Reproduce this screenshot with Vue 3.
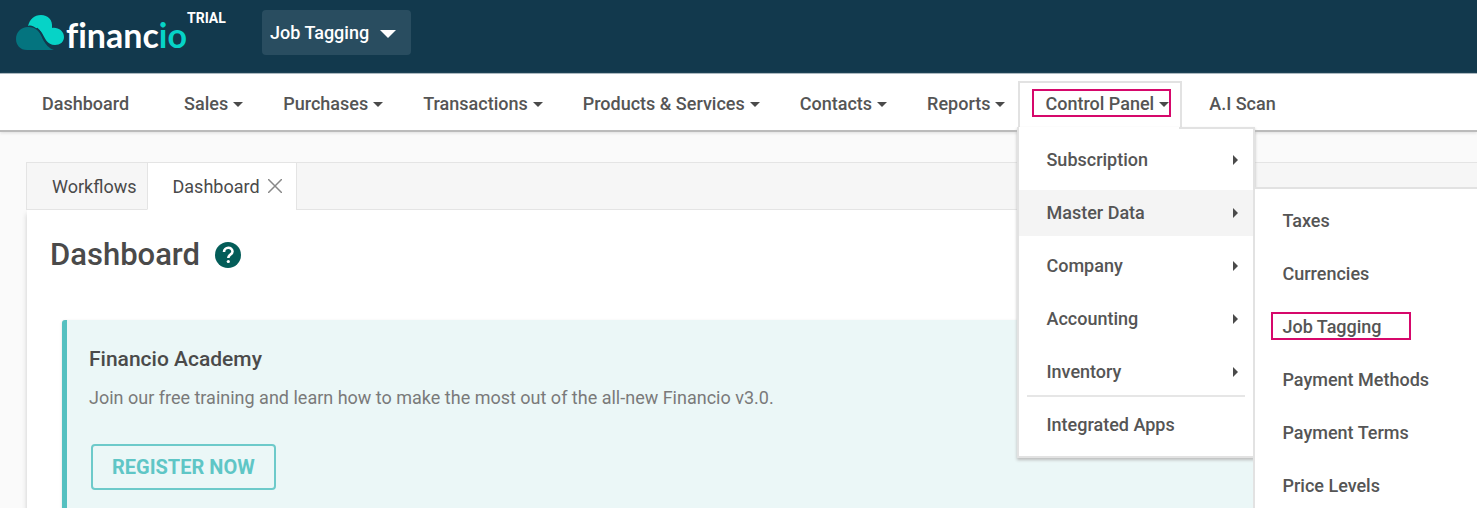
<script setup>
import { ref } from "vue";

const job = ref("Job Tagging");

const navItems = [
  { name: "Dashboard" },
  { name: "Sales", caret: true },
  { name: "Purchases", caret: true },
  { name: "Transactions", caret: true },
  { name: "Products & Services", caret: true },
  { name: "Contacts", caret: true },
  { name: "Reports", caret: true },
  { name: "Control Panel", caret: true, open: true },
  { name: "A.I Scan" },
];

const panelItems = [
  { name: "Subscription", sub: true },
  { name: "Master Data", sub: true, active: true },
  { name: "Company", sub: true },
  { name: "Accounting", sub: true },
  { name: "Inventory", sub: true },
  { name: "Integrated Apps", divided: true },
];

const masterItems = ["Taxes", "Currencies", "Job Tagging", "Payment Methods", "Payment Terms", "Price Levels"];
</script>

<template>
  <div class="page">
    <header class="topbar">
      <a href="#" class="logo">
        <svg class="cloud" width="50" height="38" viewBox="0 0 50 38">
          <path d="M12 11 C14 4 18 0 25 0 C32 0 37 5 36 13 C42 12 48 16 48 22 C48 27 44 30 39 30 C31 30 29 23 26 18 C24 15 22 13 20 13 C17 11 15 10 12 11 Z" fill="#06d3c7" />
          <path d="M11 35 C4 35 0 30 0 24 C0 17 5 12 12 12 C16 12 19 13 21 15 C27 20 27 31 38 35 Z" fill="#04747f" />
          <path d="M21 13 C26 16 26 25 32 30" fill="none" stroke="#12394d" stroke-width="1" />
        </svg>
        <span class="brand">financ<span class="teal">io</span></span>
        <span class="trial">TRIAL</span>
      </a>
      <div class="picker">
        <select v-model="job" aria-label="Job">
          <option>Job Tagging</option>
        </select>
        <svg class="picker-arrow" width="16" height="8" viewBox="0 0 16 8">
          <path d="M0 0H16L8 8Z" fill="#fff" />
        </svg>
      </div>
    </header>

    <nav class="navbar">
      <div v-for="item in navItems" :key="item.name" class="nav-item" :class="{ open: item.open }">
        <a href="#" :class="{ marked: item.open }">
          {{ item.name }}
          <span class="caret" :class="{ hidden: !item.caret }"></span>
        </a>
        <div v-if="item.open" class="menu">
          <div v-for="p in panelItems" :key="p.name" class="menu-item" :class="{ active: p.active, divided: p.divided }">
            <a href="#">{{ p.name }}</a>
            <span v-if="p.sub" class="arrow"></span>
          </div>
          <div class="submenu">
            <div v-for="m in masterItems" :key="m" class="menu-item">
              <a href="#" :class="{ marked: m === job }">{{ m }}</a>
            </div>
          </div>
        </div>
      </div>
    </nav>

    <main class="content">
      <div class="tabs">
        <button class="tab">Workflows</button>
        <button class="tab current">
          Dashboard
          <svg width="14" height="14" viewBox="0 0 14 14">
            <path d="M0 0L14 14M14 0L0 14" stroke="#888" stroke-width="1.5" />
          </svg>
        </button>
        <div class="tab-rest"></div>
      </div>
      <section class="panel">
        <h1>
          Dashboard
          <svg width="26" height="26" viewBox="0 0 26 26">
            <circle cx="13" cy="13" r="13" fill="#045d59" />
            <path d="M9 10C9 4.500 17.500 4.500 17.500 9.500C17.500 12.500 13.300 12.500 13.300 16" fill="none" stroke="#fff" stroke-width="2.600" />
            <circle cx="13.300" cy="19.500" r="1.600" fill="#fff" />
          </svg>
        </h1>
        <div class="card">
          <h2>Financio Academy</h2>
          <p>Join our free training and learn how to make the most out of the all-new Financio v3.0.</p>
          <button class="register">REGISTER NOW</button>
        </div>
      </section>
    </main>
  </div>
</template>

<style>
body {
  background: #fafafa;
}
</style>

<style scoped>
.page {
  height: 100vh;
  overflow: hidden;
  font-family: Roboto, "Liberation Sans", sans-serif;
  font-size: 18px;
  color: #4a4a4a;
}
.page * {
  box-sizing: border-box;
}
a {
  color: inherit;
  text-decoration: none;
}

.topbar {
  display: flex;
  align-items: flex-start;
  height: 74px;
  padding: 10px 16px;
  background: #12394d;
  border-bottom: 1px solid #a3b2bb;
}
.logo {
  display: flex;
  align-items: flex-start;
  width: 246px;
  color: #fff;
}
.cloud {
  margin-top: 5px;
}
.brand {
  font-family: Lato, sans-serif;
  font-size: 34px;
  font-weight: 700;
  font-variant-ligatures: none;
  line-height: 50px;
}
.teal {
  color: #06d3c7;
}
.trial {
  font-size: 14px;
  font-weight: 700;
  line-height: 16px;
}
.picker {
  position: relative;
}
.picker select {
  appearance: none;
  width: 149px;
  height: 45px;
  padding: 0 8px;
  border: 0;
  border-radius: 4px;
  background: #294d60;
  color: #fff;
  font: 500 18px Roboto, sans-serif;
}
.picker-arrow {
  position: absolute;
  right: 15px;
  top: 20px;
  pointer-events: none;
}

.navbar {
  position: relative;
  z-index: 2;
  display: flex;
  height: 58px;
  padding: 7px 15px 0;
  background: #fff;
  border-bottom: 2px solid #bbb;
  box-shadow: 0 1px 3px #ddd;
  color: #555;
  font-weight: 500;
}
.nav-item {
  position: relative;
  height: 49px;
  padding: 8px 11px 0 25px;
  border: 2px solid transparent;
  border-bottom: 0;
  white-space: nowrap;
}
.nav-item.open {
  border-color: #e2e2e2;
}
.nav-item > a {
  display: flex;
  align-items: center;
  gap: 5px;
  line-height: 26px;
}
.caret {
  border: 5px solid transparent;
  border-top-color: #4a4a4a;
  border-bottom: 0;
}
.caret.hidden {
  visibility: hidden;
}
.marked {
  position: relative;
}
.marked::after {
  content: "";
  position: absolute;
  inset: -2px -2px 0 -13px;
  border: 2px solid #d6086b;
}

.menu {
  position: absolute;
  top: 44px;
  left: -3px;
  width: 238px;
  padding: 10px 0 8px;
  background: #fff;
  border: 2px solid #e2e2e2;
  border-top: 0;
  box-shadow: 0 2px 3px #bbb;
}
.menu::before {
  content: "";
  position: absolute;
  top: 0;
  left: 160px;
  right: 0;
  border-top: 2px solid #e2e2e2;
}
.menu-item {
  display: flex;
  align-items: center;
  justify-content: space-between;
  height: 46px;
  margin-bottom: 7px;
  padding: 0 15px 0 27px;
}
.menu-item:nth-child(6) {
  margin-bottom: 0;
}
.menu-item a {
  line-height: 26px;
}
.menu-item.active {
  background: #f4f4f4;
}
.menu-item.divided {
  position: relative;
}
.menu-item.divided::before {
  content: "";
  position: absolute;
  top: -7px;
  left: 8px;
  right: 8px;
  border-top: 2px solid #e6e6e6;
}
.arrow {
  border: 5px solid transparent;
  border-left-color: #4a4a4a;
  border-right: 0;
}
.submenu {
  position: absolute;
  top: 60px;
  left: 100%;
  width: 300px;
  padding: 9px 0;
  background: #fff;
  border: 2px solid #e2e2e2;
}
.submenu .marked::after {
  left: -11px;
  right: -29px;
}

.content {
  padding: 30px 0 0 26px;
}
.tabs {
  display: flex;
  height: 48px;
}
.tab,
.tab-rest {
  background: #f6f6f6;
  border: solid #e4e4e4;
  border-width: 1px 0 1px 1px;
}
.tab {
  display: flex;
  align-items: center;
  gap: 8px;
  padding: 0 10px 0 25px;
  color: #4a4a4a;
  font: 18px Roboto, sans-serif;
}
.tab.current {
  padding-right: 14px;
  background: #fff;
  border-bottom-color: #fff;
}
.tab-rest {
  flex: 1;
}
.panel {
  min-height: 400px;
  padding: 24px 23px;
  margin-left: 1px;
  background: #fff;
  box-shadow: 0 4px 5px #ccc;
}
h1 {
  display: flex;
  align-items: center;
  gap: 15px;
  margin: 0;
  font-size: 31px;
  font-weight: 500;
  line-height: 42px;
}
.card {
  min-height: 240px;
  margin: 44px 0 0 12px;
  padding: 26px 22px;
  background: #ebf7f7;
  border-left: 5px solid #54c0c0;
  border-radius: 3px;
  box-shadow: 0 1px 3px #ddd;
}
h2 {
  margin: 0;
  font-size: 21px;
  font-weight: 500;
  line-height: 26px;
}
p {
  margin: 12px 0 32px;
  color: #7a7a7a;
  line-height: 28px;
}
.register {
  height: 46px;
  margin-left: 2px;
  padding: 0 19px;
  background: transparent;
  border: 2px solid #6dcaca;
  border-radius: 4px;
  color: #5fc6c6;
  font: 700 20px Roboto, sans-serif;
}
</style>
